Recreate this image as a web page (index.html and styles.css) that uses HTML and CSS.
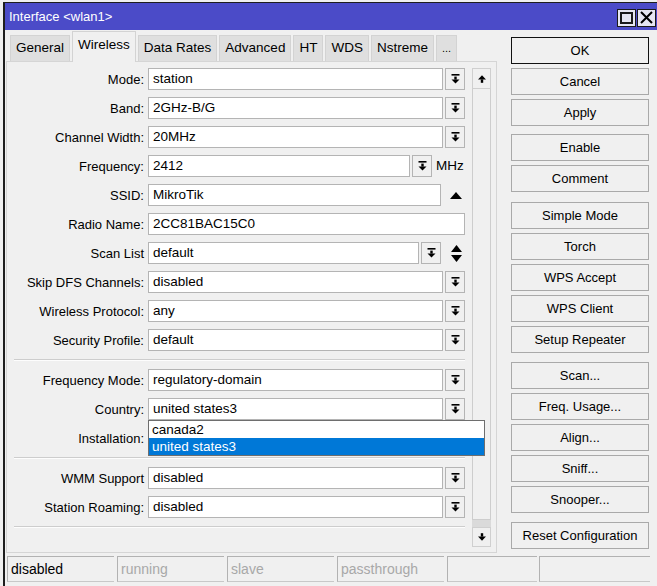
FILE: index.html
```html
<!DOCTYPE html>
<html lang="en">
<head>
  <meta charset="UTF-8">
  <title>Interface &lt;wlan1&gt;</title>
  <link rel="stylesheet" href="styles.css">
</head>
<body>
  <svg class="defs" xmlns="http://www.w3.org/2000/svg">
    <symbol id="i-dd" viewBox="0 0 9 10">
      <rect x="0.5" y="0" width="8" height="1.6"/>
      <rect x="3.3" y="2.6" width="2.4" height="3"/>
      <polygon points="0.5,5.4 8.5,5.4 4.5,9.6"/>
    </symbol>
    <symbol id="i-up" viewBox="0 0 8 8">
      <polygon points="4,0.3 8,4.5 0,4.5"/>
      <rect x="2.8" y="4.4" width="2.4" height="3.4"/>
    </symbol>
    <symbol id="i-down" viewBox="0 0 8 8">
      <rect x="2.8" y="0.2" width="2.4" height="3.4"/>
      <polygon points="0,3.5 8,3.5 4,7.7"/>
    </symbol>
  </svg>

  <div class="window">
    <!-- barra de titulo -->
    <div class="titlebar">
      <span class="title">Interface &lt;wlan1&gt;</span>
      <div class="title-buttons">
        <span class="tbtn"><span class="max-box"></span></span>
        <span class="tbtn">
          <svg width="13" height="13" viewBox="0 0 13 13"><path d="M1 1 L12 12 M12 1 L1 12" stroke="#000" stroke-width="2"/></svg>
        </span>
      </div>
    </div>

    <div class="main">
      <div class="left">
        <div class="tabs">
          <div class="tab">General</div>
          <div class="tab active">Wireless</div>
          <div class="tab">Data Rates</div>
          <div class="tab">Advanced</div>
          <div class="tab">HT</div>
          <div class="tab">WDS</div>
          <div class="tab">Nstreme</div>
          <div class="tab small">...</div>
        </div>

        <div class="panel">
          <div class="form">
            <div class="row"><label>Mode:</label><div class="field"><span class="input">station</span><span class="dd"><svg><use href="#i-dd"/></svg></span></div></div>
            <div class="row"><label>Band:</label><div class="field"><span class="input">2GHz-B/G</span><span class="dd"><svg><use href="#i-dd"/></svg></span></div></div>
            <div class="row"><label>Channel Width:</label><div class="field"><span class="input">20MHz</span><span class="dd"><svg><use href="#i-dd"/></svg></span></div></div>
            <div class="row"><label>Frequency:</label><div class="field"><span class="input">2412</span><span class="dd"><svg><use href="#i-dd"/></svg></span><span class="unit">MHz</span></div></div>
            <div class="row"><label>SSID:</label><div class="field"><span class="input">MikroTik</span><span class="side">
              <svg width="12" height="7" viewBox="0 0 12 7"><polygon points="0,7 12,7 6,0"/></svg></span></div></div>
            <div class="row"><label>Radio Name:</label><div class="field"><span class="input">2CC81BAC15C0</span></div></div>
            <div class="row"><label>Scan List</label><div class="field"><span class="input">default</span><span class="dd"><svg><use href="#i-dd"/></svg></span><span class="side">
              <svg width="11" height="17" viewBox="0 0 11 17"><polygon points="0,7 11,7 5.5,0"/><polygon points="0,10 11,10 5.5,17"/></svg></span></div></div>
            <div class="row"><label>Skip DFS Channels:</label><div class="field"><span class="input">disabled</span><span class="dd"><svg><use href="#i-dd"/></svg></span></div></div>
            <div class="row"><label>Wireless Protocol:</label><div class="field"><span class="input">any</span><span class="dd"><svg><use href="#i-dd"/></svg></span></div></div>
            <div class="row"><label>Security Profile:</label><div class="field"><span class="input">default</span><span class="dd"><svg><use href="#i-dd"/></svg></span></div></div>

            <div class="sep"></div>

            <div class="row"><label>Frequency Mode:</label><div class="field"><span class="input">regulatory-domain</span><span class="dd"><svg><use href="#i-dd"/></svg></span></div></div>
            <div class="row"><label>Country:</label><div class="field"><span class="input">united states3</span><span class="dd"><svg><use href="#i-dd"/></svg></span>
              <!-- lista desplegable abierta -->
              <div class="popup">
                <div class="opt">canada2</div>
                <div class="opt selected">united states3</div>
              </div>
            </div></div>
            <div class="row"><label>Installation:</label><div class="field"><span class="input"></span><span class="dd"><svg><use href="#i-dd"/></svg></span></div></div>

            <div class="sep"></div>

            <div class="row"><label>WMM Support</label><div class="field"><span class="input">disabled</span><span class="dd"><svg><use href="#i-dd"/></svg></span></div></div>
            <div class="row"><label>Station Roaming:</label><div class="field"><span class="input">disabled</span><span class="dd"><svg><use href="#i-dd"/></svg></span></div></div>

            <div class="sep"></div>
          </div>

          <div class="scrollbar">
            <span class="sb-btn"><svg><use href="#i-up"/></svg></span>
            <span class="sb-thumb"></span>
            <span class="sb-track"></span>
            <span class="sb-btn"><svg><use href="#i-down"/></svg></span>
          </div>
        </div>
      </div>

      <div class="buttons">
        <div class="btn default">OK</div>
        <div class="btn">Cancel</div>
        <div class="btn">Apply</div>
        <div class="btn g1">Enable</div>
        <div class="btn">Comment</div>
        <div class="btn g2">Simple Mode</div>
        <div class="btn">Torch</div>
        <div class="btn">WPS Accept</div>
        <div class="btn">WPS Client</div>
        <div class="btn">Setup Repeater</div>
        <div class="btn g3">Scan...</div>
        <div class="btn">Freq. Usage...</div>
        <div class="btn">Align...</div>
        <div class="btn">Sniff...</div>
        <div class="btn">Snooper...</div>
        <div class="btn g3">Reset Configuration</div>
      </div>
    </div>

    <div class="status">
      <div class="cell">disabled</div>
      <div class="cell off">running</div>
      <div class="cell off">slave</div>
      <div class="cell off">passthrough</div>
      <div class="cell narrow"></div>
      <div class="cell last"></div>
    </div>
  </div>
</body>
</html>
```

FILE: styles.css
```css
/* Estilos generales */
* {
  box-sizing: border-box;
}
body {
  margin: 0;
  background: #f0f0f0;
  font-family: "Liberation Sans", Arial, sans-serif;
  font-size: 13px;
  color: #000;
  overflow: hidden;
}
.defs {
  position: absolute;
  width: 0;
  height: 0;
  overflow: hidden;
}
.window {
  margin: 2px 0 0 3px;
  border-left: 2px solid #1e1e1e;
  border-top: 1px solid #1e1e1e;
  height: 590px;
  background: #f0f0f0;
}

/* Barra de titulo */
.titlebar {
  height: 27px;
  background: #4b4bc8;
  color: #fff;
  display: flex;
  align-items: center;
  justify-content: space-between;
  padding: 0 1px 0 4px;
}
.title {
  font-size: 13px;
}
.title-buttons {
  display: flex;
  gap: 1px;
  margin-top: 2px;
}
.tbtn {
  width: 19px;
  height: 18px;
  background: #e6e6f2;
  border: 1px solid #1a1a1a;
  display: flex;
  align-items: center;
  justify-content: center;
}
.max-box {
  width: 13px;
  height: 12px;
  border: 2px solid #1a1a1a;
}

/* Cuerpo */
.main {
  display: flex;
  padding: 0 8px 0 1px;
}
.left {
  width: 491px;
}
.tabs {
  display: flex;
  align-items: flex-end;
  gap: 2px;
  height: 30px;
  margin-top: 1px;
  padding-left: 4px;
}
.tab {
  height: 26px;
  padding: 0 5px;
  background: #dfdfdf;
  border: 1px solid #d3d3d3;
  border-bottom: none;
  font-size: 13.5px;
  line-height: 24px;
  white-space: nowrap;
}
.tab.active {
  height: 31px;
  margin-bottom: -1px;
  background: #f0f0f0;
  line-height: 26px;
  position: relative;
  z-index: 2;
}
.tab.small {
  font-size: 11px;
}
.panel {
  height: 492px;
  border: 1px solid #d5d5d5;
  display: flex;
  background: #f0f0f0;
}
.form {
  width: 458px;
  padding-top: 6px;
  display: flex;
  flex-direction: column;
  gap: 7px;
}
.row {
  display: flex;
  align-items: center;
  height: 22px;
}
.row label {
  width: 137px;
  margin-right: 4px;
  text-align: right;
  white-space: nowrap;
}
.field {
  width: 317px;
  height: 22px;
  display: flex;
  gap: 2px;
  position: relative;
}
.input {
  flex: 1;
  height: 22px;
  background: #fff;
  border: 1px solid #b4b4b4;
  padding-left: 4px;
  line-height: 20px;
  font-size: 13.5px;
  white-space: nowrap;
  overflow: hidden;
}
.dd {
  width: 20px;
  height: 22px;
  border: 1px solid #b4b4b4;
  background: #f0f0f0;
  display: flex;
  align-items: center;
  justify-content: center;
}
.dd svg {
  width: 9px;
  height: 10px;
}
.unit {
  width: 31px;
  padding-left: 2px;
  line-height: 22px;
  font-size: 13.5px;
}
.side {
  width: 22px;
  display: flex;
  align-items: center;
  justify-content: center;
  padding-left: 4px;
}
.sep {
  width: 451px;
  height: 2px;
  margin: 1px 0 1px 7px;
  border-top: 1px solid #cdcdcd;
  border-bottom: 1px solid #fdfdfd;
}

/* Lista desplegable */
.popup {
  position: absolute;
  top: 22px;
  left: 0;
  width: 337px;
  background: #fff;
  border: 1px solid #6e6e6e;
  z-index: 10;
}
.opt {
  height: 17px;
  line-height: 17px;
  padding-left: 3px;
  font-size: 13.5px;
}
.opt.selected {
  background: #0078d7;
  color: #fff;
}

/* Barra de desplazamiento */
.scrollbar {
  width: 19px;
  height: 479px;
  margin: 6px 0 0 7px;
  display: flex;
  flex-direction: column;
}
.sb-btn {
  height: 20px;
  border: 1px solid #cfcfcf;
  background: #f0f0f0;
  display: flex;
  align-items: center;
  justify-content: center;
}
.sb-btn:first-child {
  height: 21px;
}
.sb-btn svg {
  width: 8px;
  height: 8px;
}
.sb-thumb {
  flex: 1;
  border: 1px solid #cdcdcd;
  border-top: none;
  background: #f0f0f0;
}
.sb-track {
  height: 7px;
  background: #dadada;
}

/* Botones de la derecha */
.buttons {
  width: 138px;
  margin-left: 14px;
  padding-top: 7px;
  display: flex;
  flex-direction: column;
  gap: 4px;
}
.btn {
  height: 27px;
  border: 1px solid #a9a9a9;
  background: #f0f0f0;
  text-align: center;
  line-height: 25px;
  font-size: 13px;
  white-space: nowrap;
}
.btn.default {
  border-color: #111;
}
.btn.g1 {
  margin-top: 4px;
}
.btn.g2 {
  margin-top: 6px;
}
.btn.g3 {
  margin-top: 5px;
}

/* Barra de estado */
.status {
  display: flex;
  gap: 3px;
  margin: 3px 0 0 2px;
}
.cell {
  width: 107px;
  height: 26px;
  border-top: 1px solid #b2b2b2;
  border-left: 1px solid #b2b2b2;
  border-bottom: 1px solid #c8c8c8;
  padding-left: 3px;
  line-height: 24px;
  font-size: 14px;
}
.cell.off {
  color: #a8a8a8;
}
.cell.narrow {
  width: 90px;
}
.cell.last {
  width: 111px;
  margin-left: -1px;
}
```
